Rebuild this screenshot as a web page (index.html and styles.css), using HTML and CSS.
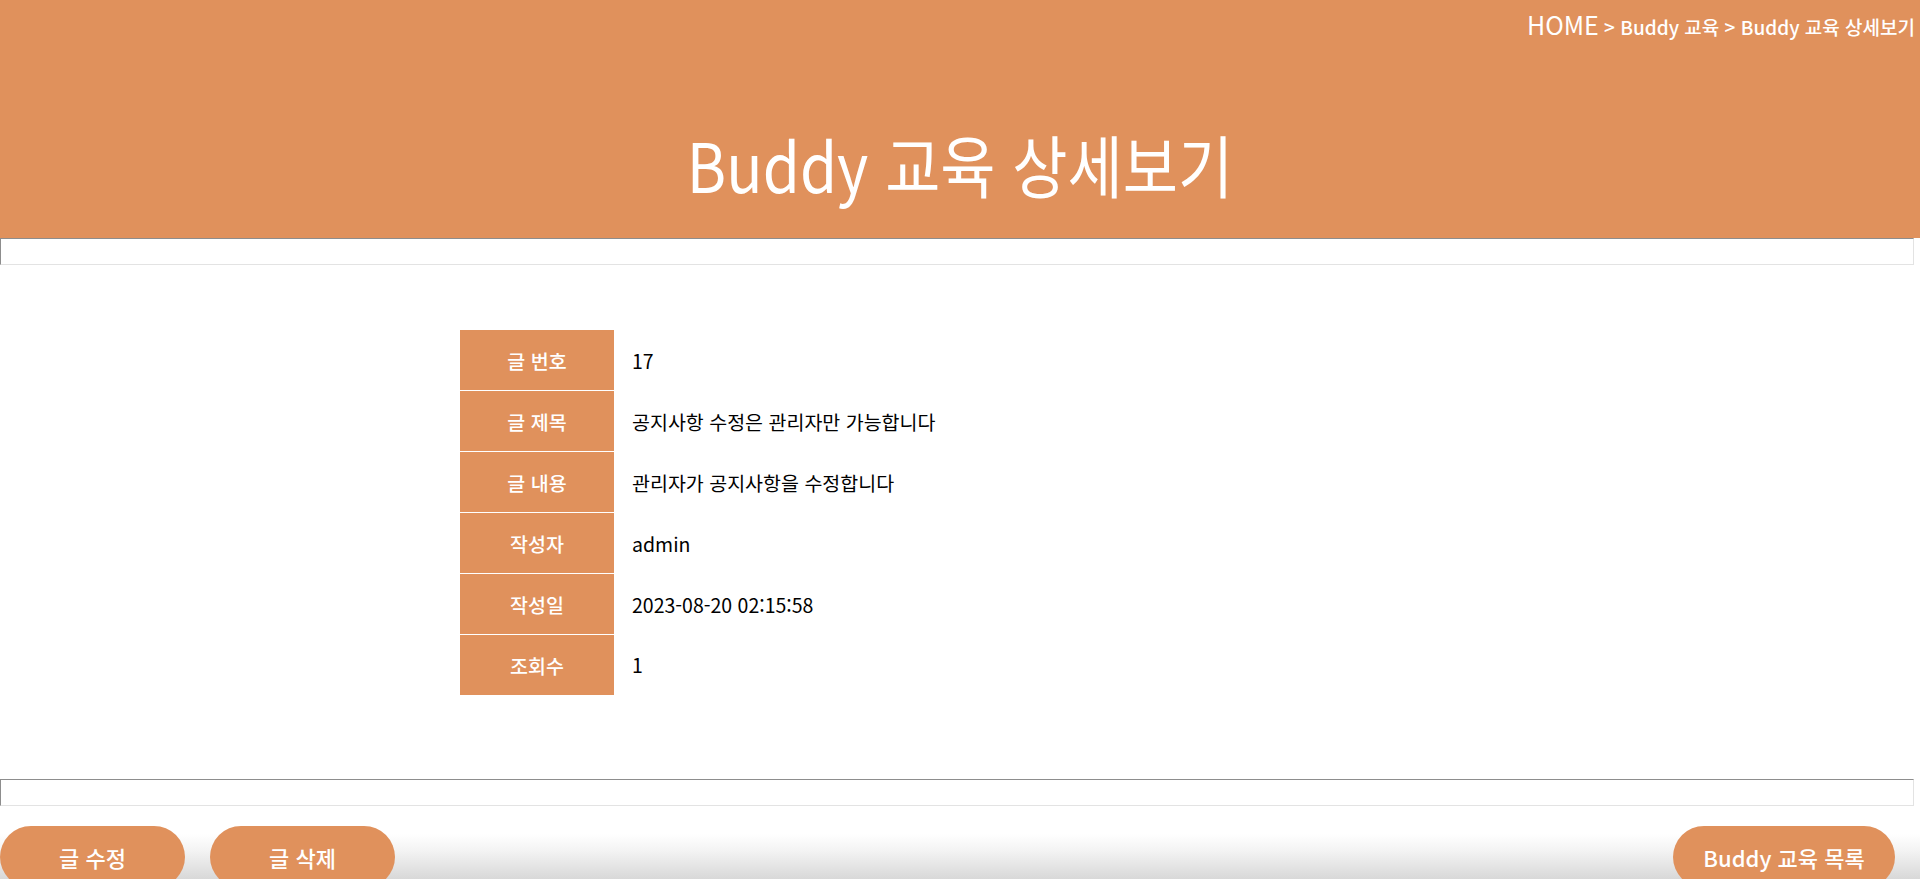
FILE: index.html
```html
<!DOCTYPE html>
<html lang="ko">
<head>
<meta charset="utf-8">
<title>Buddy 교육 상세보기</title>
<link rel="stylesheet" href="styles.css">
</head>
<body>
<header class="top">
  <nav class="crumbs"><span class="home">HOME</span><span class="sep"> &gt; </span>Buddy 교육<span class="sep"> &gt; </span>Buddy 교육 상세보기</nav>
  <h1 class="title">Buddy 교육 상세보기</h1>
</header>
<div class="frame"></div>
<main class="content">
  <table class="detail">
    <tr><th>글 번호</th><td>17</td></tr>
    <tr><th>글 제목</th><td>공지사항 수정은 관리자만 가능합니다</td></tr>
    <tr><th>글 내용</th><td>관리자가 공지사항을 수정합니다</td></tr>
    <tr><th>작성자</th><td>admin</td></tr>
    <tr><th>작성일</th><td>2023-08-20 02:15:58</td></tr>
    <tr><th>조회수</th><td>1</td></tr>
  </table>
</main>
<div class="frame"></div>
<footer class="actions">
  <div class="left">
    <button class="pill">글 수정</button>
    <button class="pill">글 삭제</button>
  </div>
  <button class="pill pill-wide">Buddy 교육 목록</button>
</footer>
</body>
</html>
```
FILE: styles.css
```css
html, body {
  margin: 0;
  padding: 0;
  overflow: hidden;
  height: 879px;
}
body {
  font-family: "Noto Sans CJK KR", "Noto Sans", sans-serif;
  background: #fff;
  color: #000;
}
.top {
  background: #e0915c;
  height: 238px;
  display: flex;
  flex-direction: column;
}
.crumbs {
  align-self: flex-end;
  color: #fff;
  font-size: 19px;
  font-weight: 500;
  padding: 4px 5px 0 0;
  line-height: 40px;
}
.crumbs .home {
  font-size: 25px;
  font-weight: 400;
}
.title {
  margin: 77px 0 0;
  text-align: center;
  color: #fff;
  font-weight: 400;
  font-size: 60px;
  line-height: 80px;
  transform: scaleY(1.13);
}
.frame {
  height: 25px;
  width: 1912px;
  border-top: 1px solid #8d8d8d;
  border-left: 1px solid #8d8d8d;
  border-bottom: 1px solid #e3e3e3;
  border-right: 1px solid #e3e3e3;
  background: #fff;
}
.content {
  padding: 65px 0 84px;
}
.detail {
  width: 1000px;
  margin: 0 auto;
  border-collapse: collapse;
}
.detail th {
  width: 154px;
  height: 60px;
  background: #e0915c;
  color: #fff;
  font-weight: 500;
  font-size: 19.5px;
  padding: 0;
  border-bottom: 1px solid #fff;
}
.detail tr:last-child th {
  border-bottom: none;
}
.detail td {
  padding: 0 0 0 18px;
  font-size: 19.5px;
  text-align: left;
}
.actions {
  margin-top: 20px;
  height: 55px;
  display: flex;
  justify-content: space-between;
  align-items: flex-start;
  padding-right: 25px;
  background: linear-gradient(to bottom, #ffffff 0px, #ffffff 8px, #f3f3f3 25px, #d6d6d6 55px);
}
.left {
  display: flex;
  gap: 25px;
}
.pill {
  width: 185px;
  height: 62px;
  border: none;
  border-radius: 31px;
  background: #e0915c;
  color: #fff;
  font-family: inherit;
  font-size: 22px;
  font-weight: 500;
  padding: 0;
}
.pill-wide {
  width: 222px;
}
```
